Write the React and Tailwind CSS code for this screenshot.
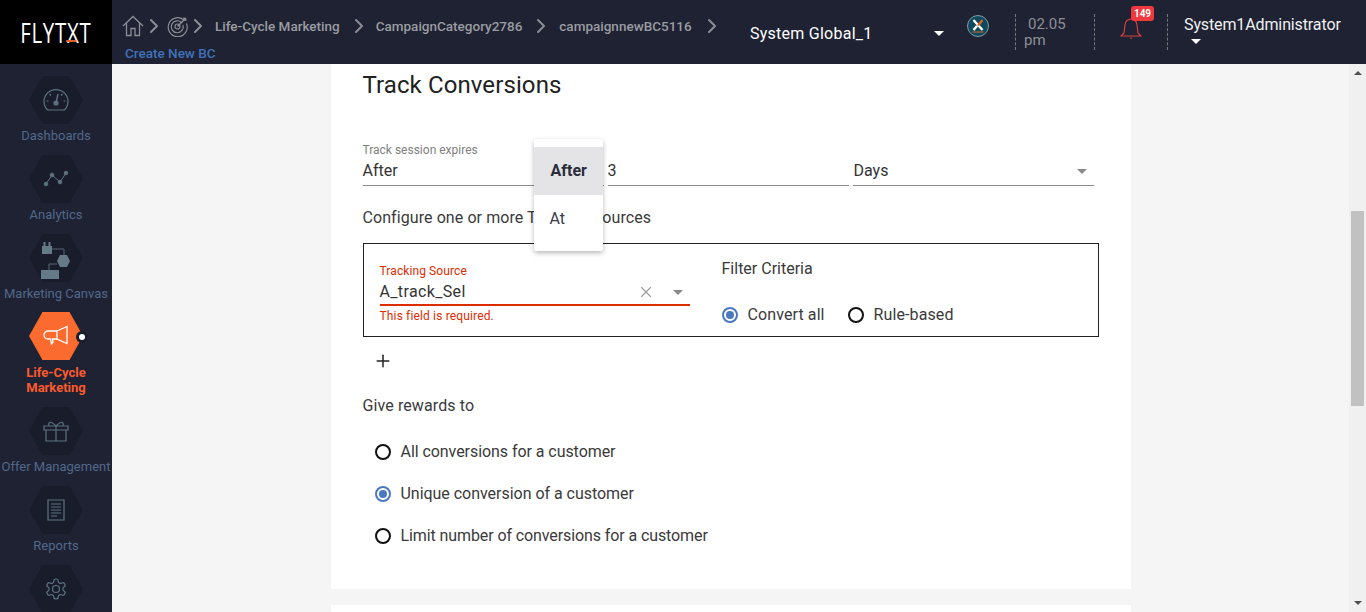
import { X, Plus, ChevronRight } from 'lucide-react'

const HEX = '[clip-path:polygon(25%_0,75%_0,100%_50%,75%_100%,25%_100%,0_50%)]'

const Gauge = () => (
  <svg width="26" height="24" viewBox="0 0 26 24" fill="none" stroke="#5d7280" strokeWidth="1.2">
    <path d="M4 21.5 A12 12 0 1 1 22 21.5 Q21.5 22 20 22 H6 Q4.500 22 4 21.500Z" />
    <path d="M13 15 L15 6" strokeWidth="1.4" />
    <circle cx="13" cy="15" r="2" fill="#5d7280" />
    <path d="M3.500 13 H5.500 M20.500 13 H22.500 M6.500 6 L8 7.500 M19.500 6 L18 7.500" />
  </svg>
)

const Trend = () => (
  <svg width="26" height="18" viewBox="0 0 26 18" fill="#5d7280" stroke="#5d7280" strokeWidth="1">
    <path d="M3 14 L9 5 L17 12 L23 3" fill="none" />
    <circle cx="3" cy="14" r="1.800" /><circle cx="9" cy="5" r="1.800" /><circle cx="17" cy="12" r="1.800" /><circle cx="23" cy="3" r="1.800" />
  </svg>
)

const Flow = () => (
  <svg width="30" height="42" viewBox="0 0 30 42" fill="#647a86">
    <path d="M1 9 H11 V17 H1Z M2.500 5 H4.500 V9 H2.500Z M7.500 5 H9.500 V9 H7.500Z" />
    <path d="M11 12 H23 V18 M16 27 H8 V33" fill="none" stroke="#647a86" strokeWidth="0.8" />
    <path d="M19 18 H26 L29 24 L26 30 H19 L16 24Z" />
    <path d="M0 33 H18 V42 H0Z" />
  </svg>
)

const Megaphone = () => (
  <svg width="26" height="22" viewBox="0 0 26 22" fill="none" stroke="#fff" strokeWidth="1.300">
    <path d="M14 6 L24 1.500 V18.500 L14 14 Z" />
    <path d="M14 6 H5 A4 4 0 0 0 5 14 H7.500 L8.500 19 L10 17 L9.500 14 H14" />
  </svg>
)

const Gift = () => (
  <svg width="26" height="22" viewBox="0 0 26 22" fill="none" stroke="#5d7280" strokeWidth="1.200">
    <path d="M1 6 H25 V10 H1Z M3 10 V21 H23 V10 M13 6 V21" />
    <path d="M13 6 C8 1 5 1 6 6 M13 6 C18 1 21 1 20 6" />
  </svg>
)

const Report = () => (
  <svg width="18" height="22" viewBox="0 0 18 22" fill="none" stroke="#5d7280" strokeWidth="1.200">
    <path d="M1 1 H17 V21 H1Z M4 5 H14 M4 8 H14 M4 11 H14 M4 14 H14 M4 17 H10" />
  </svg>
)

const Gear = () => (
  <svg width="24" height="24" viewBox="0 0 24 24" fill="none" stroke="#5d7280" strokeWidth="1.200">
    <path d="M12.220 2h-.44a2 2 0 0 0-2 2v.18a2 2 0 0 1-1 1.730l-.43.250a2 2 0 0 1-2 0l-.15-.080a2 2 0 0 0-2.730.730l-.220.380a2 2 0 0 0 .730 2.730l.150.100a2 2 0 0 1 1 1.720v.510a2 2 0 0 1-1 1.740l-.150.090a2 2 0 0 0-.730 2.730l.220.380a2 2 0 0 0 2.730.730l.150-.080a2 2 0 0 1 2 0l.430.250a2 2 0 0 1 1 1.730V20a2 2 0 0 0 2 2h.440a2 2 0 0 0 2-2v-.18a2 2 0 0 1 1-1.730l.430-.250a2 2 0 0 1 2 0l.150.080a2 2 0 0 0 2.730-.730l.220-.390a2 2 0 0 0-.730-2.730l-.150-.080a2 2 0 0 1-1-1.740v-.5a2 2 0 0 1 1-1.740l.150-.090a2 2 0 0 0 .730-2.730l-.220-.380a2 2 0 0 0-2.730-.730l-.150.080a2 2 0 0 1-2 0l-.430-.250a2 2 0 0 1-1-1.730V4a2 2 0 0 0-2-2z" />
    <circle cx="12" cy="12" r="3.500" />
  </svg>
)

const NAV = [
  { label: 'Dashboards', icon: <Gauge />, gap: 'mb-[10px]' },
  { label: 'Analytics', icon: <Trend />, gap: 'mb-[10px]' },
  { label: 'Marketing Canvas', icon: <Flow />, gap: 'mb-[9px]' },
  { label: 'Life-Cycle Marketing', icon: <Megaphone />, active: true },
  { label: 'Offer Management', icon: <Gift />, gap: 'mb-[10px]' },
  { label: 'Reports', icon: <Report />, gap: 'mb-[10px]' },
  { icon: <Gear /> },
]

const HomeIcon = () => (
  <svg width="22" height="22" viewBox="0 0 22 22" fill="none" stroke="#8a8d94" strokeWidth="1.300" className="shrink-0">
    <path d="M1 11 L11 1.500 L21 11 M4.500 8 V20.500 H9 V13.500 H13 V20.500 H17.500 V8" />
  </svg>
)

const Target = () => (
  <svg width="22" height="22" viewBox="0 0 22 22" fill="none" stroke="#8a8d94" strokeWidth="1.200">
    <path d="M17.500 5.500 A9.500 9.500 0 1 0 19.500 8.500" />
    <path d="M14.500 7.500 A6 6 0 1 0 16 10" />
    <circle cx="10.500" cy="11.500" r="2.500" />
    <path d="M10.500 11.500 L19 3 M17 2.500 V5 H19.500" strokeWidth="1.500" />
  </svg>
)

const Chev = ({ className }) => (
  <ChevronRight size={24} strokeWidth={2} className={`text-[#8a8d94] shrink-0 ${className}`} />
)

const Caret = ({ color = 'border-t-white' }) => (
  <span className={`inline-block w-0 h-0 border-x-[5px] border-x-transparent border-t-[5px] ${color}`} />
)

const Crumb = ({ children, className }) => (
  <div className={`flex items-center shrink-0 ${className}`}>
    <span className="text-[13.5px] font-medium text-[#9a9ca1] whitespace-nowrap">{children}</span>
  </div>
)

function Header() {
  return (
    <header className="h-16 bg-[#1e2233] flex shrink-0">
      <div className="w-[112px] h-16 bg-black flex items-center justify-center shrink-0">
        <span className="relative inline-block scale-x-[0.73] text-white text-[28px] tracking-[1px] font-['Open_Sans',sans-serif] leading-none">
          FLYTXT
          <span className="absolute left-[63px] bottom-[4px] w-[14px] h-[2px] bg-[#e2622a]" />
        </span>
      </div>
      <div className="w-[638px] pl-[10px] pt-[14px] shrink-0">
        <div className="flex items-center h-6">
          <HomeIcon />
          <Chev className="-ml-[2px] -mr-[4px]" />
          <span className="ml-[5px]"><Target /></span>
          <Chev className="-ml-[3px] -mr-[4px]" />
          <Crumb className="ml-[9px]">Life-Cycle Marketing</Crumb>
          <Chev className="ml-[7px] -mr-[4px]" />
          <Crumb className="ml-[9px]">CampaignCategory2786</Crumb>
          <Chev className="ml-[7px] -mr-[4px]" />
          <Crumb className="ml-[10px]">campaignnewBC5116</Crumb>
          <Chev className="ml-[8px]" />
        </div>
        <div className="mt-[5px] ml-[3px] text-[13.5px] leading-[20px] font-medium text-[#3f72b8]">Create New BC</div>
      </div>
      <div className="w-[200px] flex items-center justify-between pr-[6px] shrink-0 h-[66px]">
        <span className="text-[16px] tracking-[0.25px] text-white mt-[1px]">System Global_1</span>
        <Caret />
      </div>
      <svg className="ml-[17px] mt-[15px] shrink-0" width="22" height="22" viewBox="0 0 22 22">
        <circle cx="11" cy="11" r="10.500" fill="#0f4a5c" stroke="#9fb4bd" strokeWidth="0.8" />
        <path d="M6.500 5 L15.500 15 M6.500 15 L10 11" stroke="#fff" strokeWidth="2.400" fill="none" />
        <path d="M15.500 5 L11 10.500" stroke="#e2622a" strokeWidth="2.200" fill="none" />
        <path d="M5.500 17 H16.500" stroke="#e2622a" strokeWidth="1" />
      </svg>
      <div className="ml-[26px] mt-[14px] h-9 border-l border-dashed border-[#777] w-[79px] shrink-0 pl-2 text-[#8e9096] text-[15px] leading-[16px]">
        <div className="pl-1 pt-[2px]">02.05</div>
        <div>pm</div>
      </div>
      <div className="mt-[14px] h-9 border-l border-dashed border-[#777] w-[73px] shrink-0 relative">
        <svg className="absolute left-[25px] top-[3px]" width="22" height="22" viewBox="0 0 22 22" fill="none" stroke="#d9403a" strokeWidth="1.200">
          <path d="M1 19 H21 L18 16 L17 8 A6 6 0 0 0 5 8 L4 16 Z M10 21 H12" />
        </svg>
        <span className="absolute left-[36px] -top-2 w-[23px] h-[15px] rounded-[3px] bg-[#f0383f] text-white text-[10px] font-bold leading-[15px] text-center">149</span>
      </div>
      <div className="mt-[14px] h-9 border-l border-dashed border-[#777] flex-1 pl-4 pt-[1px] relative">
        <div className="text-[16px] tracking-[-0.12px] text-[#f0f0f0] leading-5 whitespace-nowrap">System1Administrator</div>
        <div className="pl-[7px] leading-none mt-[4px] flex"><Caret /></div>
      </div>
    </header>
  )
}

function Sidebar() {
  return (
    <nav className="w-[112px] shrink-0 bg-[#1e2233] overflow-hidden pt-3 flex flex-col">
      {NAV.map((n, i) => (
        <div key={i} className="flex flex-col items-center shrink-0 text-center">
          <div className="relative w-[54px] h-[48px]">
            <div className={`w-full h-full flex items-center justify-center ${n.active ? 'bg-[#fb6a2e]' : 'bg-[#191d2b]'} ${HEX}`}>
              {n.icon}
            </div>
            {n.active && (
              <span className="absolute left-[47px] top-[19px] w-[12px] h-[12px] rounded-full bg-white border-[3px] border-[#191d2b]" />
            )}
          </div>
          {n.active ? (
            <div className="mt-[5px] mb-[12px] w-[80px] text-[13px] leading-[15px] font-bold text-[#fb5a2e]">{n.label}</div>
          ) : n.label && (
            <div className={`mt-[3px] ${n.gap} text-[13px] leading-[18px] text-[#52688a] whitespace-nowrap`}>{n.label}</div>
          )}
        </div>
      ))}
    </nav>
  )
}

const Radio = ({ checked, label, className = '', tracking = 'tracking-[-0.03px]' }) => (
  <label className={`flex items-center gap-[10px] text-[16px] text-[#3a3a3a] ${className}`}>
    {checked ? (
      <span className="w-4 h-4 rounded-full border-2 border-[#4a78c0] flex items-center justify-center">
        <span className="w-2 h-2 rounded-full bg-[#4a78c0]" />
      </span>
    ) : (
      <span className="w-4 h-4 rounded-full border-2 border-[#111]" />
    )}
    <span className={tracking}>{label}</span>
  </label>
)

function Card() {
  return (
    <section className="w-[800px] h-[525px] bg-white px-8 relative shrink-0">
      <h1 className="text-[24px] tracking-[0.1px] leading-8 pt-[5px] text-[#212121] h-[37px] box-content">Track Conversions</h1>

      <div className="flex mt-[38px]">
        <div className="w-[241px] shrink-0">
          <div className="text-[12px] leading-[14px] -mt-[1px] text-[#808080]">Track session expires</div>
          <div className="text-[16px] leading-5 mt-[4px] pb-[4px] text-[#333] border-b border-[#8a8a8a]">After</div>
        </div>
        <div className="ml-[4px] w-[241px] pt-[17px] shrink-0">
          <div className="text-[16px] leading-5 pb-[4px] text-[#333] border-b border-[#8a8a8a]">3</div>
        </div>
        <div className="ml-[4px] w-[241px] pt-[17px] shrink-0">
          <div className="text-[16px] leading-5 pb-[4px] text-[#333] border-b border-[#8a8a8a] flex items-center justify-between pl-[1px] pr-[7px]">
            Days <Caret color="border-t-[#8a8a8a]" />
          </div>
        </div>
      </div>

      <div className="mt-[22px] text-[16px] tracking-[0.08px] leading-5 text-[#3a3a3a]">Configure one or more Tracking Sources</div>

      <div className="mt-[15px] w-[736px] h-[94px] border border-[#222] flex pl-4 pt-[20px]">
        <div className="w-[310px] shrink-0">
          <div className="text-[12px] tracking-[0.1px] leading-[14px] text-[#dd2c00]">Tracking Source</div>
          <div className="flex items-center text-[16px] leading-5 text-[#333] mt-[4px] pb-[2px] border-b-2 border-[#dd2c00] pr-[7px]">
            <span className="flex-1 tracking-[0.35px]">A_track_Sel</span>
            <X size={18} strokeWidth={1.500} className="text-[#999] mr-[18px]" />
            <Caret color="border-t-[#8a8a8a]" />
          </div>
          <div className="text-[12px] tracking-[0.15px] leading-[14px] mt-[3px] text-[#dd2c00]">This field is required.</div>
        </div>
        <div className="ml-[32px] -mt-[5px]">
          <div className="text-[16px] leading-5 text-[#3a3a3a]">Filter Criteria</div>
          <div className="flex mt-[24px]">
            <Radio checked label="Convert all" tracking="tracking-[0.1px]" />
            <Radio label="Rule-based" className="ml-[23px]" tracking="tracking-[0.1px]" />
          </div>
        </div>
      </div>

      <Plus size={20} strokeWidth={1.800} className="text-[#222] mt-[14px] ml-[10px]" />

      <div className="mt-[25px] text-[16px] tracking-[0.1px] leading-5 text-[#3a3a3a]">Give rewards to</div>
      <div className="mt-[26px] pl-3 flex flex-col gap-[22px] leading-5">
        <Radio label="All conversions for a customer" tracking="tracking-[-0.06px]" />
        <Radio checked label="Unique conversion of a customer" />
        <Radio label="Limit number of conversions for a customer" tracking="tracking-[-0.1px]" />
      </div>

      {/* select menu open over the form */}
      <div className="absolute left-[203px] top-[75px] w-[69px] h-[112px] bg-white rounded-[2px] py-2 shadow-[0_2px_5px_rgba(0,0,0,0.28)] z-10">
        <div className="h-12 bg-[#e4e4e7] pl-[17px] flex items-center text-[16px] font-bold text-[#2b2d3a]">After</div>
        <div className="h-12 pl-4 flex items-center text-[16px] text-[#3a3a4a]">At</div>
      </div>
    </section>
  )
}

function Scrollbar() {
  return (
    <div className="w-[17px] shrink-0 bg-[#f0f0f0] flex flex-col items-center">
      <span className="mt-[7px] w-0 h-0 border-x-[4px] border-x-transparent border-b-[4px] border-b-[#505050]" />
      <div className="mt-[136px] w-[13px] h-[195px] bg-[#c1c1c1]" />
      <span className="mt-auto mb-[7px] w-0 h-0 border-x-[4px] border-x-transparent border-t-[4px] border-t-[#505050]" />
    </div>
  )
}

export default function App() {
  return (
    <div className="h-[612px] w-full overflow-hidden flex flex-col bg-[#f5f5f5] font-['Roboto',sans-serif]">
      <Header />
      <div className="flex flex-1 min-h-0">
        <Sidebar />
        <main className="flex-1 overflow-hidden flex flex-col items-center gap-4">
          <Card />
          <div className="w-[800px] h-8 bg-white shrink-0" />
        </main>
        <Scrollbar />
      </div>
    </div>
  )
}
